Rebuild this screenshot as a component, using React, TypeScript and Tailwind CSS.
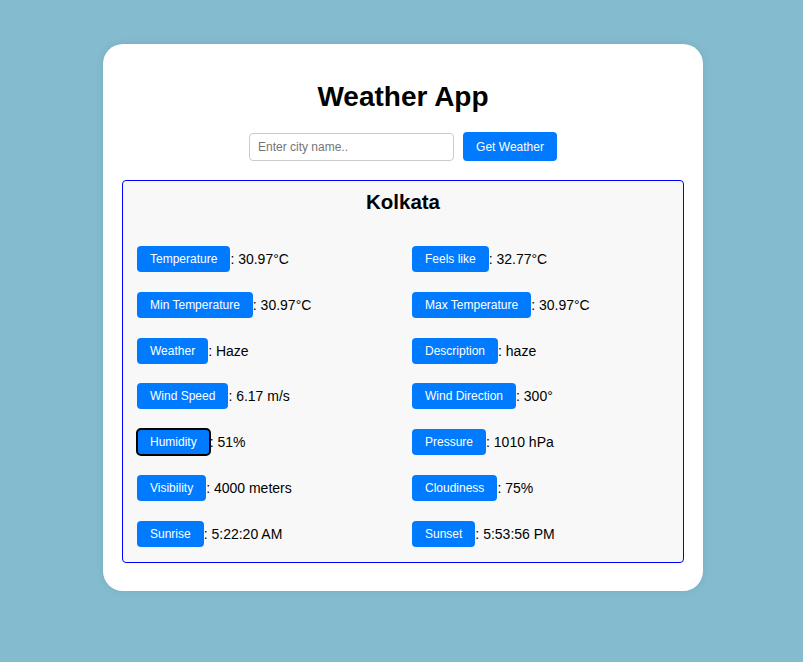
import React from "react";

const items: [string, string][] = [
  ["Temperature", "30.97°C"],
  ["Feels like", "32.77°C"],
  ["Min Temperature", "30.97°C"],
  ["Max Temperature", "30.97°C"],
  ["Weather", "Haze"],
  ["Description", "haze"],
  ["Wind Speed", "6.17 m/s"],
  ["Wind Direction", "300°"],
  ["Humidity", "51%"],
  ["Pressure", "1010 hPa"],
  ["Visibility", "4000 meters"],
  ["Cloudiness", "75%"],
  ["Sunrise", "5:22:20 AM"],
  ["Sunset", "5:53:56 PM"],
];

export default function App() {
  return (
    <div
      className="w-full min-h-[662px] bg-[#84bbcf] pt-[44px] pl-[3px]"
      style={{ fontFamily: '"Liberation Sans", Arial, sans-serif' }}
    >
      <div className="mx-auto w-[600px] bg-white rounded-[20px] px-[19px] pt-[37px] pb-[28px] shadow-[0_0_8px_rgba(0,0,0,0.08)]">
        <h1 className="text-center text-[28px] leading-[32px] font-bold text-black">Weather App</h1>
        <div className="mt-[19px] flex items-center justify-center gap-[9px]">
          <input
            type="text"
            placeholder="Enter city name.."
            className="w-[205px] h-[28px] border border-[#cccccc] rounded-[4px] px-[8px] text-[12px] text-black placeholder:text-[#757575] outline-none bg-white"
          />
          <button className="h-[29px] w-[94px] bg-[#007bff] text-white text-[12px] rounded-[4px]">Get Weather</button>
        </div>
        <div className="mt-[19px] border border-[#0000ff] rounded-[4px] bg-[#f8f8f8] pt-[9px] pb-[15px] px-[14px]">
          <h2 className="text-center font-bold text-[20.5px] leading-[24px] text-black">Kolkata</h2>
          <div className="mt-[32px] grid grid-cols-[257px_257px] gap-x-[18px] gap-y-[19.75px]">
            {items.map(([label, value]) => (
              <div key={label} className="flex items-center text-[14px] text-black leading-[16px]">
                <span
                  className={
                    label === "Humidity"
                      ? "h-[26px] flex items-center bg-[#007bff] text-white text-[12px] rounded-[4px] px-[13px] outline-2 outline-black -outline-offset-1"
                      : "h-[26px] flex items-center bg-[#007bff] text-white text-[12px] rounded-[4px] px-[13px]"
                  }
                >
                  {label}
                </span>
                <span className="whitespace-pre">: {value}</span>
              </div>
            ))}
          </div>
        </div>
      </div>
    </div>
  );
}
